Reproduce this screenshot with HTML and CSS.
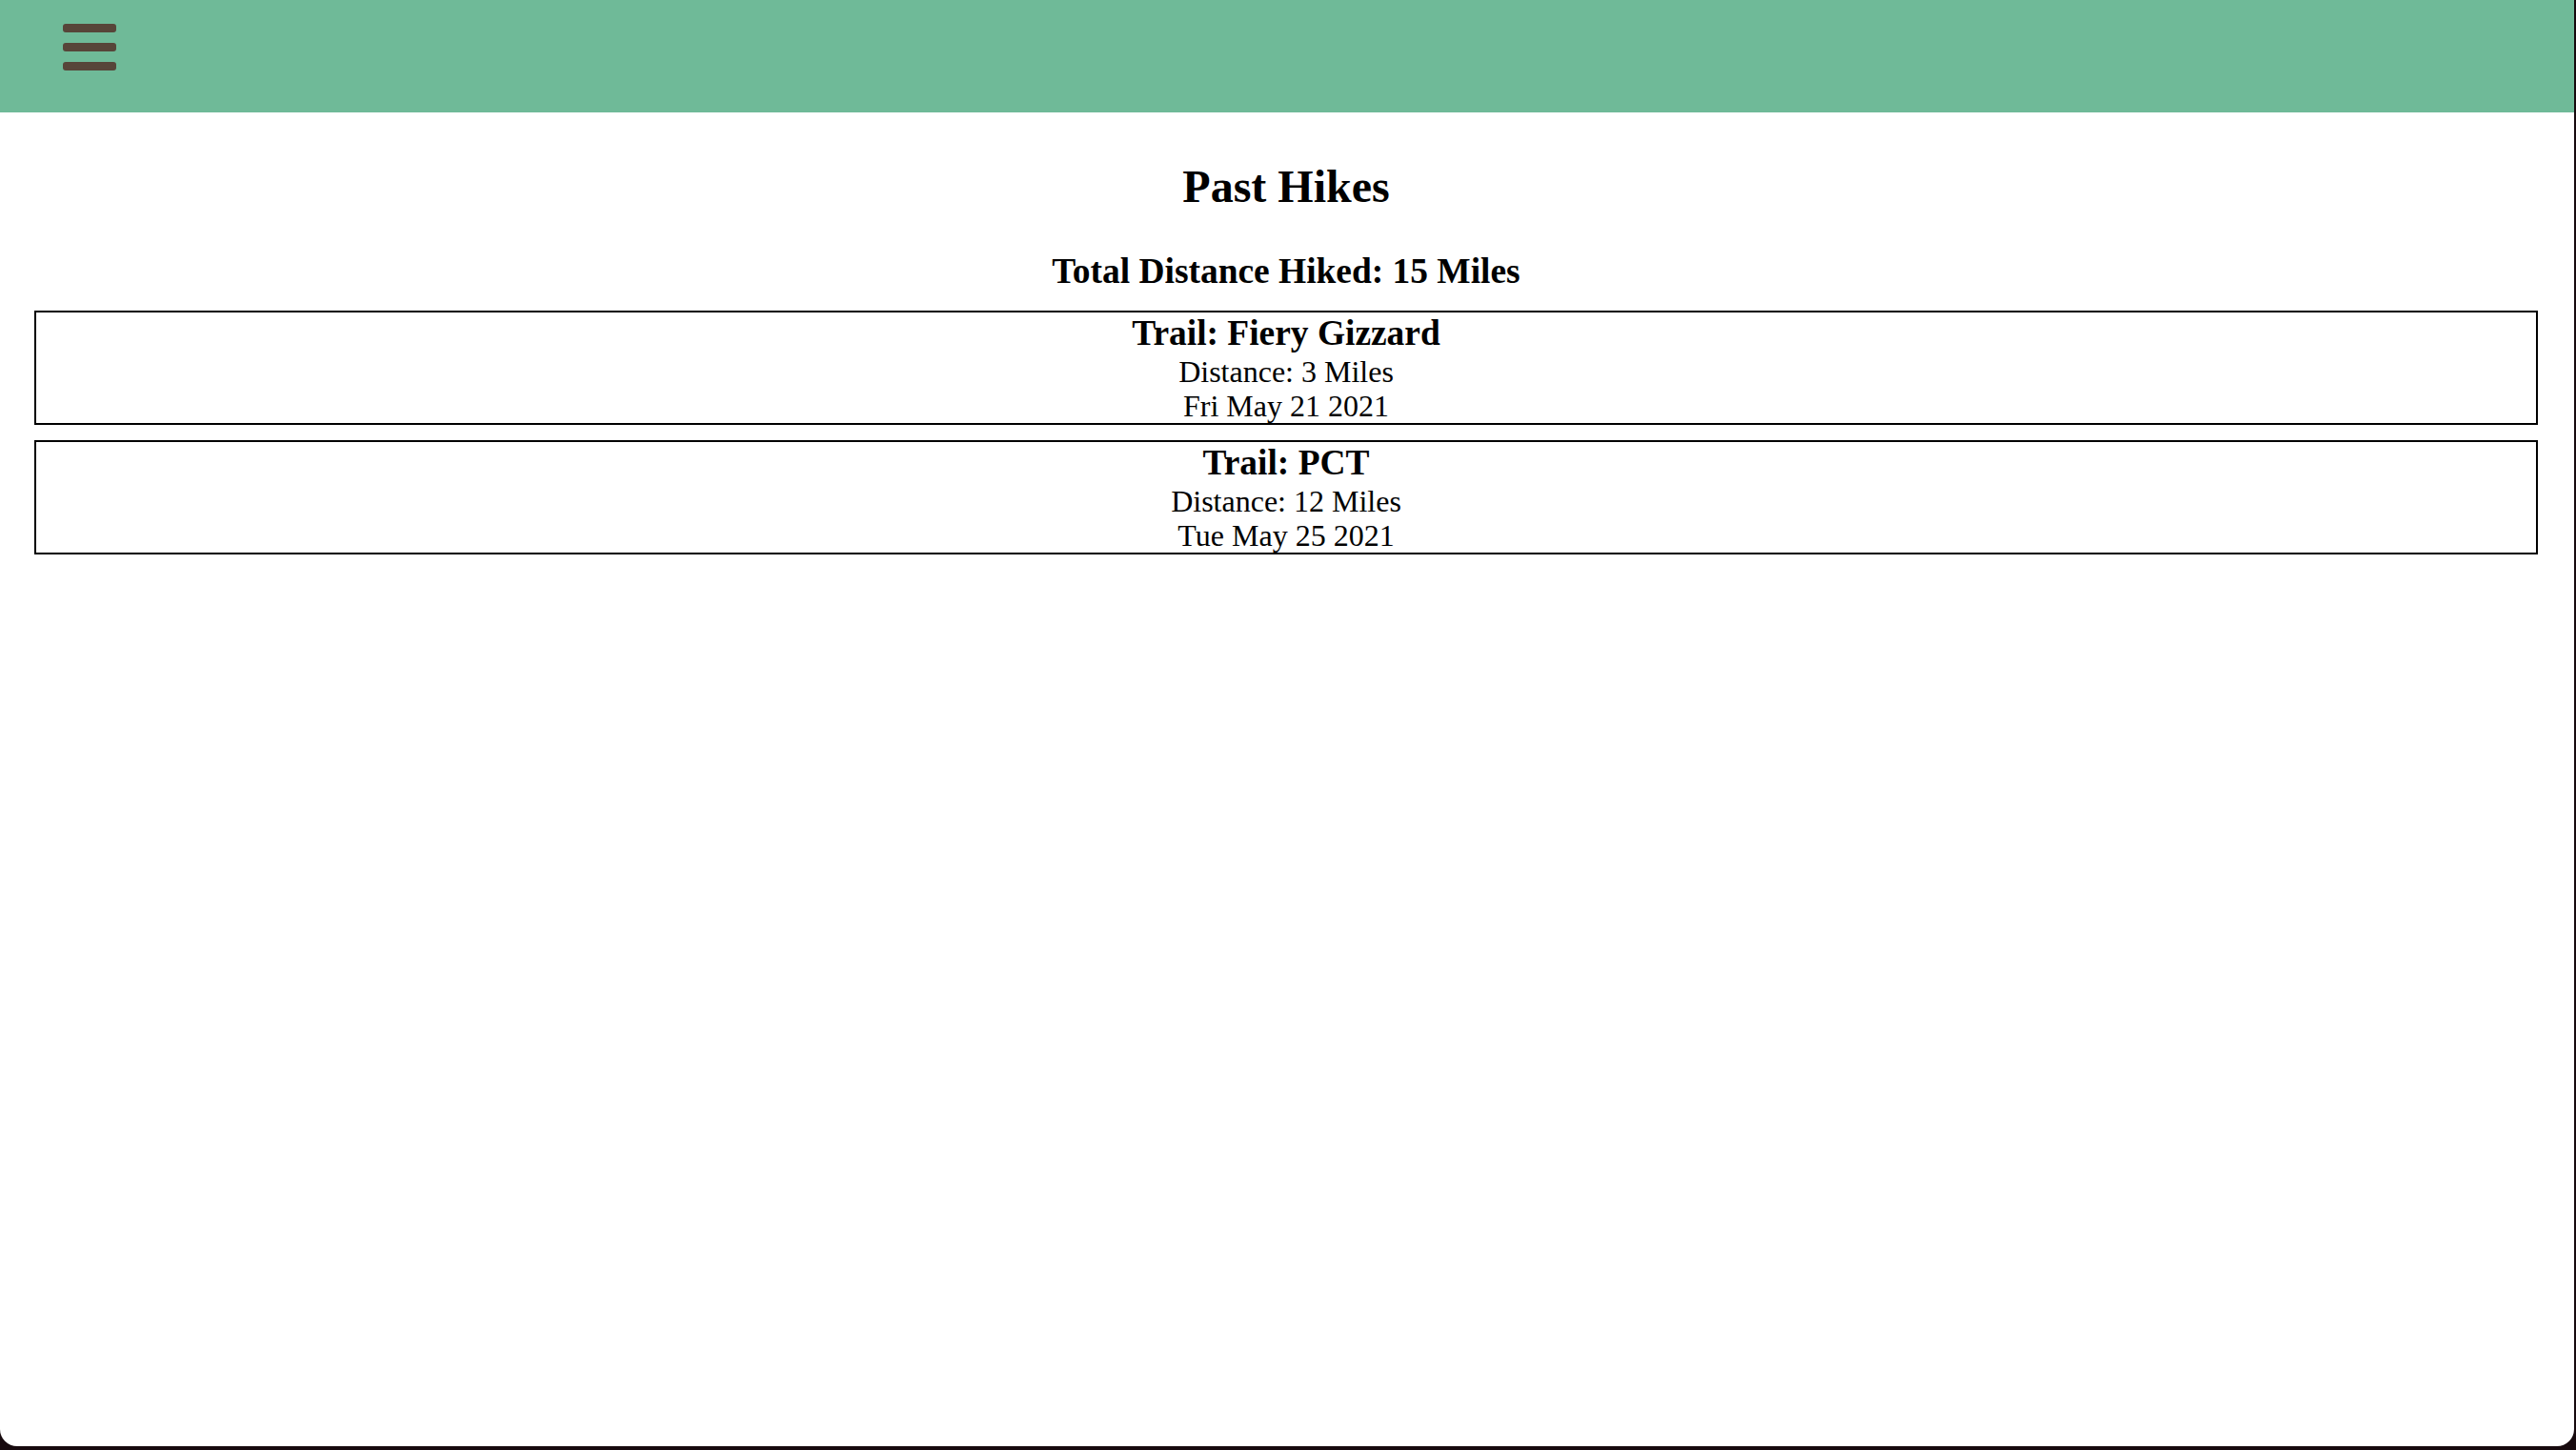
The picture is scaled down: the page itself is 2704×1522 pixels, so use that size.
FILE: index.html
```html
<!DOCTYPE html>
<html lang="en">
<head>
<meta charset="utf-8">
<title>Past Hikes</title>
<link rel="stylesheet" href="styles.css">
</head>
<body>
<div class="window">
  <header class="topbar">
    <div class="burger" aria-label="Menu">
      <span class="bar"></span>
      <span class="bar"></span>
      <span class="bar"></span>
    </div>
  </header>
  <main class="content">
    <h2 class="title">Past Hikes</h2>
    <h3 class="total">Total Distance Hiked: 15 Miles</h3>
    <div class="hike">
      <h3 class="trail">Trail: Fiery Gizzard</h3>
      <div class="line">Distance: 3 Miles</div>
      <div class="line">Fri May 21 2021</div>
    </div>
    <div class="hike">
      <h3 class="trail">Trail: PCT</h3>
      <div class="line">Distance: 12 Miles</div>
      <div class="line">Tue May 25 2021</div>
    </div>
  </main>
</div>
</body>
</html>
```

FILE: styles.css
```css
html, body {
  margin: 0;
  padding: 0;
}

body {
  background: #170a0e;
  width: 2704px;
  height: 1522px;
  overflow: hidden;
  font-family: "Liberation Serif", "Times New Roman", serif;
  color: #000;
}

.window {
  width: 2702px;
  height: 1518px;
  background: #fff;
  border-radius: 0 0 18px 18px;
  overflow: hidden;
}

.topbar {
  height: 118px;
  box-sizing: border-box;
  background: #6fba98;
  padding: 25px 0 0 66px;
}

.burger {
  display: flex;
  flex-direction: column;
  gap: 11px;
  width: 56px;
}

.bar {
  display: block;
  height: 9px;
  border-radius: 3px;
  background: #574539;
}

.content {
  padding: 0 38px 0 36px;
  text-align: center;
}

.title {
  font-size: 48px;
  font-weight: 700;
  margin: 50px 0 40px;
}

.total {
  font-size: 37.44px;
  font-weight: 700;
  margin: 0 0 20px;
}

.hike {
  border: 2px solid #000;
  margin-bottom: 16px;
}

.trail {
  font-size: 37.44px;
  line-height: 44px;
  font-weight: 700;
  margin: 0;
}

.line {
  font-size: 32px;
  line-height: 36px;
}
```
